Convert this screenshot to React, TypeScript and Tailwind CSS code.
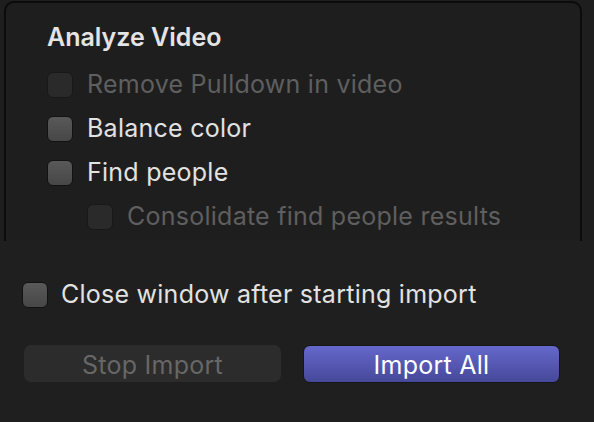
import React from 'react';

const font = { fontFamily: 'Inter, "Liberation Sans", sans-serif' };

interface CheckRowProps {
  label: string;
  disabled?: boolean;
  indent?: boolean;
}

const Box: React.FC<{ disabled?: boolean }> = ({ disabled }) => (
  <span
    className={
      disabled
        ? 'block h-[26px] w-[26px] shrink-0 rounded-[6px] border border-[#181818] bg-[#2a2a2a]'
        : 'block h-[26px] w-[26px] shrink-0 rounded-[6px] border border-[#121212] bg-gradient-to-b from-[#595959] to-[#474747]'
    }
  />
);

function CheckRow({ label, disabled = false, indent = false }: CheckRowProps) {
  return (
    <div className={`flex h-[44px] items-center gap-[14px] ${indent ? 'pl-[40px]' : ''}`}>
      <Box disabled={disabled} />
      <span className={`text-[25px] tracking-[0.01em] ${disabled ? 'text-[#5f5f5f]' : 'text-[#e2e2e2]'}`}>
        {label}
      </span>
    </div>
  );
}

export default function App() {
  return (
    <div className="flex h-[422px] w-[594px] flex-col overflow-hidden bg-[#1e1e1e]" style={font}>
      <div className="ml-[4px] mt-[1px] h-[240px] w-[578px] shrink-0 rounded-t-[10px] border-2 border-b-0 border-[#0b0b0b] bg-[#1e1e1e] pl-[41px] pt-[18px]">
        <div className="text-[25px] font-semibold leading-[32px] text-[#e4e4e4]">Analyze Video</div>
        <div className="mt-[10px]">
          <CheckRow label="Remove Pulldown in video" disabled />
          <CheckRow label="Balance color" />
          <CheckRow label="Find people" />
          <CheckRow label="Consolidate find people results" disabled indent />
        </div>
      </div>
      <div className="flex flex-1 flex-col bg-[#1f1f1f] px-[22px] pt-[32px]">
        <div className="flex h-[44px] items-center gap-[13px]">
          <Box />
          <span className="text-[25px] tracking-[0.01em] text-[#e2e2e2]">Close window after starting import</span>
        </div>
        <div className="mt-[28px] flex gap-[22px] pl-[2px]">
          <button className="h-[37px] w-[257px] rounded-[7px] bg-[#2c2c2c] pt-[3px] text-[25px] leading-[32px] tracking-[0.01em] text-[#676767]">
            Stop Import
          </button>
          <button className="h-[38px] w-[257px] rounded-[7px] border border-[#151515] bg-gradient-to-b from-[#6668cc] to-[#46489a] pt-[2px] text-[25px] leading-[32px] tracking-[0.01em] text-white">
            Import All
          </button>
        </div>
      </div>
    </div>
  );
}
